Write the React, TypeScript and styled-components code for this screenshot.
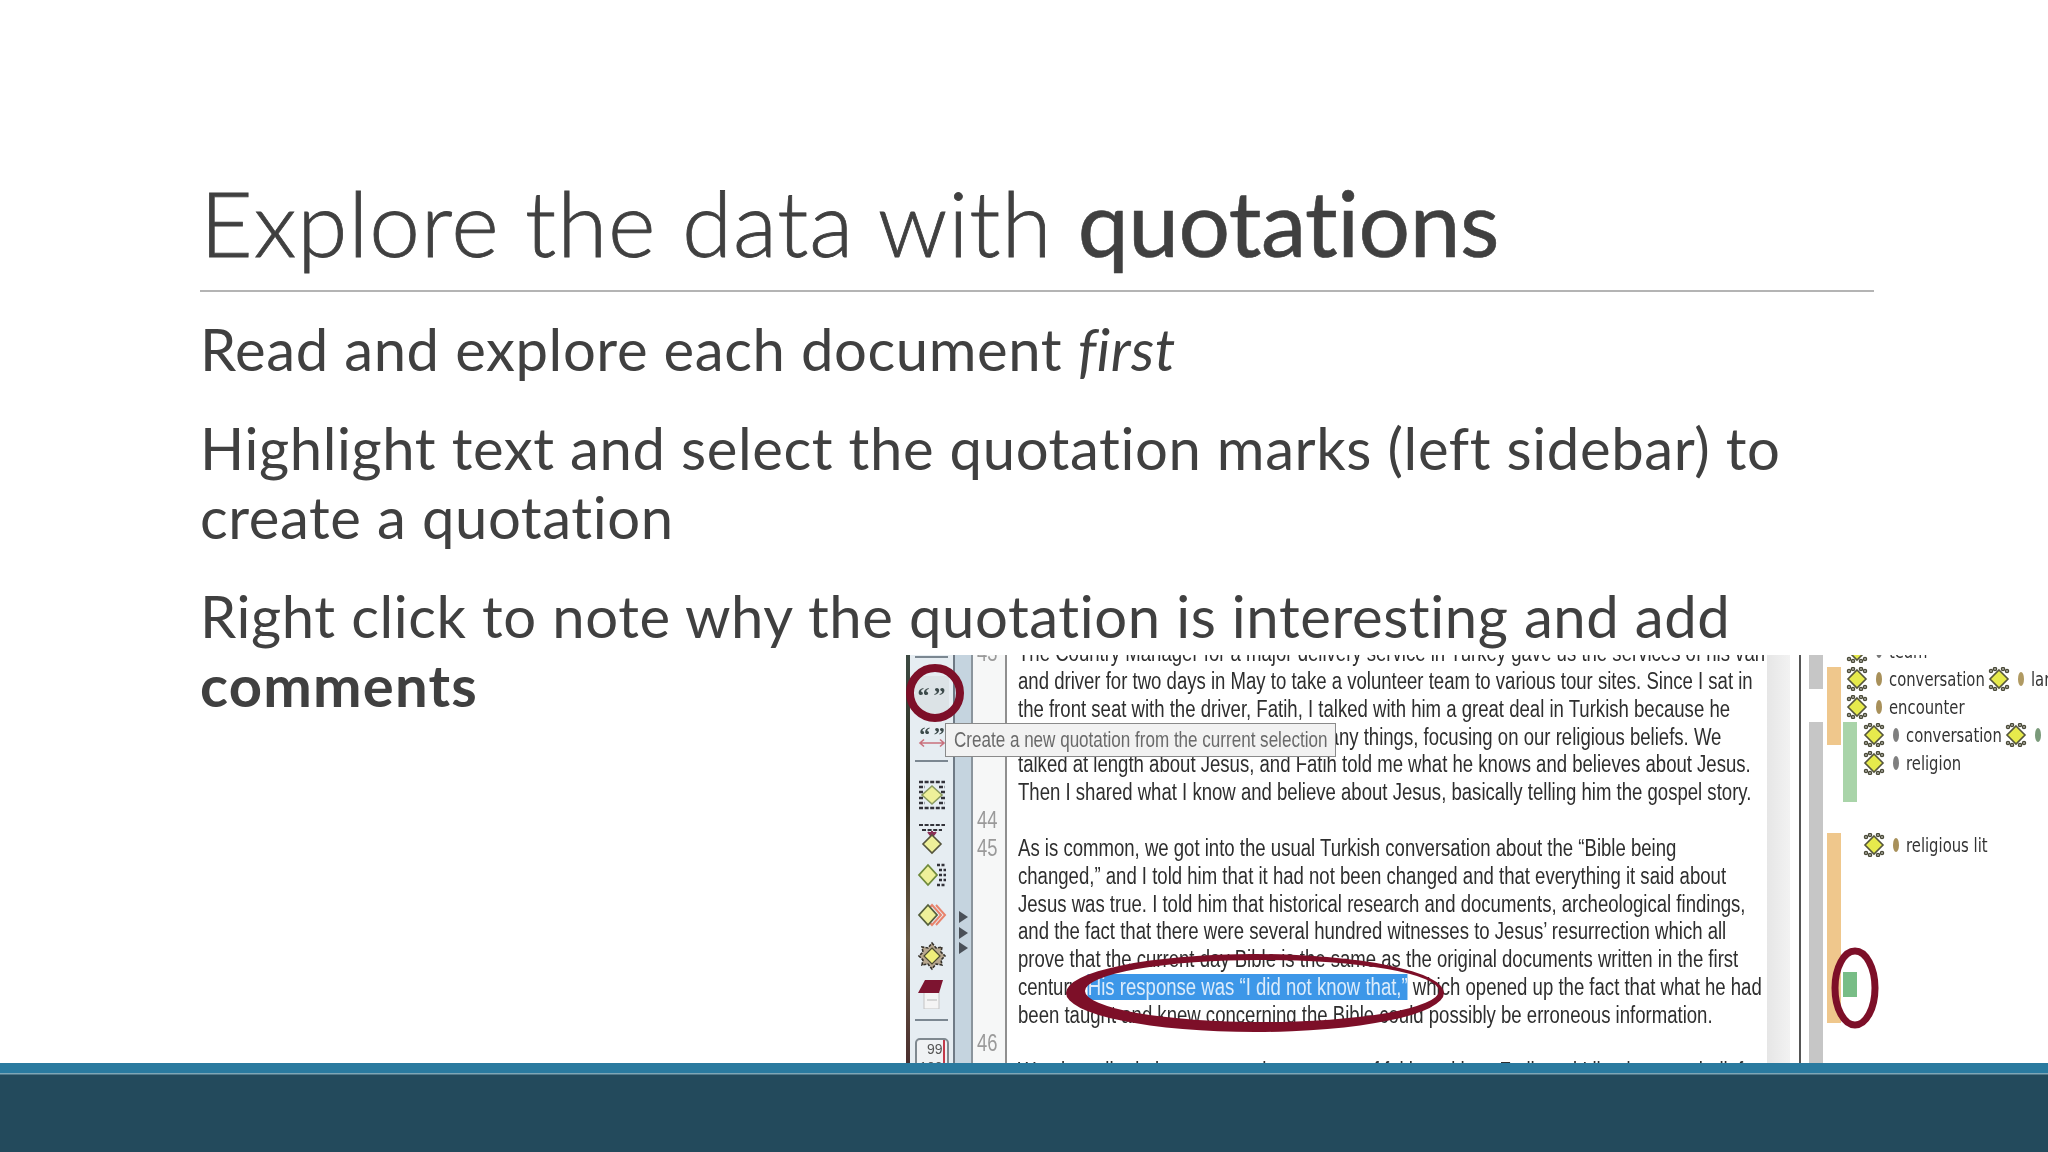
import React from "react";
import styled, { createGlobalStyle } from "styled-components";

const GlobalStyle = createGlobalStyle`
	html, body {
		margin: 0;
		background: #fff;
		overflow: hidden;
	}
`;

const DOC_RED = "#7d0f28";

const CodeGlyph = () => (
	<GlyphSvg viewBox="0 0 22 24">
		<g fill="none" stroke="#4a4a38" strokeWidth="1.5">
			<circle cx="3" cy="4" r="1.5" />
			<circle cx="7" cy="2" r="1.5" />
			<circle cx="15" cy="2" r="1.5" />
			<circle cx="19" cy="4" r="1.5" />
			<circle cx="3" cy="20" r="1.5" />
			<circle cx="7" cy="22" r="1.5" />
			<circle cx="15" cy="22" r="1.5" />
			<circle cx="19" cy="20" r="1.5" />
		</g>
		<path d="M11 3 L20 12 L11 21 L2 12 Z" fill="#e6ea4c" stroke="#55553c" strokeWidth="1.6" />
	</GlyphSvg>
);

const App = () => {
	const docRows: { num?: string; text?: React.ReactNode }[] = [
		{ num: "43", text: "The Country Manager for a major delivery service in Turkey gave us the services of his van" },
		{ text: "and driver for two days in May to take a volunteer team to various tour sites. Since I sat in" },
		{ text: "the front seat with the driver, Fatih, I talked with him a great deal in Turkish because he" },
		{ text: "was very interested in talking about many things, focusing on our religious beliefs. We" },
		{ text: "talked at length about Jesus, and Fatih told me what he knows and believes about Jesus." },
		{ text: "Then I shared what I know and believe about Jesus, basically telling him the gospel story." },
		{ num: "44" },
		{ num: "45", text: "As is common, we got into the usual Turkish conversation about the “Bible being" },
		{ text: "changed,” and I told him that it had not been changed and that everything it said about" },
		{ text: "Jesus was true. I told him that historical research and documents, archeological findings," },
		{ text: "and the fact that there were several hundred witnesses to Jesus’ resurrection which all" },
		{ text: "prove that the current day Bible is the same as the original documents written in the first" },
		{
			text: (
				<>
					century. <Selected>His response was “I did not know that,”</Selected> which opened up the fact that what he had
				</>
			),
		},
		{ text: "been taught and knew concerning the Bible could possibly be erroneous information." },
		{ num: "46" },
		{ text: "We also talked about many other aspects of faith and how Fatih and I lived out our beliefs" },
	];

	return (
		<Slide>
			<GlobalStyle />
			<Stage>
				<Title>
					Explore the data with <strong>quotations</strong>
				</Title>
				<Body>
					<p>
						Read and explore each document <em>first</em>
					</p>
					<p>
						Highlight text and select the quotation marks (left sidebar) to
						<br />
						create a quotation
					</p>
					<p>
						Right click to note why the quotation is interesting and add
						<br />
						<strong>comments</strong>
					</p>
				</Body>
				<Figure>
					<Edge />
					<Toolbar>
						<ToolRule $mt={1} />
						<QuoteButton>“ ”</QuoteButton>
						<ToolIcon $mt={12} width="30" height="24" viewBox="0 0 30 24">
							<text x="15" y="16" textAnchor="middle" fontFamily="Liberation Serif" fontWeight="700" fontSize="22" fill="#3c4a4a" wordSpacing="-2">
								“ ”
							</text>
							<path d="M3 17 H27 M7 13.5 L3 17 L7 20.5 M23 13.5 L27 17 L23 20.5" fill="none" stroke="#c9707c" strokeWidth="1.6" />
						</ToolIcon>
						<ToolRule $mt={10} />
						<ToolIcon $mt={18} width="30" height="30" viewBox="0 0 30 30">
							<path d="M2 2 H28 M2 7 H8 M22 7 H28 M2 12 H6 M24 12 H28 M2 18 H6 M24 18 H28 M2 23 H8 M22 23 H28 M2 28 H28" stroke="#33333a" strokeWidth="2.4" strokeDasharray="4 1.6" />
							<path d="M15 6 L25 15 L15 24 L5 15 Z" fill="#eef09a" stroke="#8a9a60" strokeWidth="1.6" />
						</ToolIcon>
						<ToolIcon $mt={12} width="30" height="38" viewBox="0 0 30 38">
							<path d="M2 3 H28 M5 8 H25" stroke="#33333a" strokeWidth="2.2" strokeDasharray="4 1.6" />
							<path d="M15 9 V14 M11 10 L15 15 L19 10" fill="#8a2f55" stroke="#8a2f55" strokeWidth="2" />
							<path d="M15 13 L24 22 L15 31 L6 22 Z" fill="#eef09a" stroke="#55553c" strokeWidth="1.6" />
						</ToolIcon>
						<ToolIcon $mt={2} width="30" height="26" viewBox="0 0 30 26">
							<path d="M11 3 L20 13 L11 23 L2 13 Z" fill="#eef09a" stroke="#6f8a3c" strokeWidth="1.8" />
							<path d="M20 3 H29 M22 8 H29 M22 13 H29 M22 18 H29 M20 23 H29" stroke="#33333a" strokeWidth="2.6" strokeDasharray="3 1.5" />
						</ToolIcon>
						<ToolIcon $mt={14} width="30" height="26" viewBox="0 0 30 26">
							<path d="M15 3 L24 13 L15 23 L6 13 Z M19 3 L28 13 L19 23" fill="none" stroke="#e8836c" strokeWidth="2" />
							<path d="M11 3 L20 13 L11 23 L2 13 Z" fill="#eef09a" stroke="#55603c" strokeWidth="1.8" />
						</ToolIcon>
						<ToolIcon $mt={13} width="30" height="30" viewBox="0 0 30 30">
							<path d="M15 2 L19 7 L25 6 L24 11 L28 15 L24 19 L25 24 L19 23 L15 28 L11 23 L5 24 L6 19 L2 15 L6 11 L5 6 L11 7 Z" fill="#b8a890" stroke="#33302a" strokeWidth="1.6" strokeDasharray="3 1.2" />
							<path d="M15 7 L23 15 L15 23 L7 15 Z" fill="#f0ee7a" stroke="#4a4a30" strokeWidth="1.2" />
						</ToolIcon>
						<ToolIcon $mt={8} width="30" height="30" viewBox="0 0 30 30">
							<rect x="7" y="13" width="15" height="17" fill="#f4f4f4" stroke="#c4c4c4" />
							<path d="M8 1 H26 L22 14 H1 Z" fill="#7d1430" />
							<path d="M10 21 H20" stroke="#c8c8c8" strokeWidth="1.4" />
						</ToolIcon>
						<ToolRule $mt={10} />
						<CountBox>
							99
							<br />
							100
						</CountBox>
					</Toolbar>
					<Strip>
						<StripArrow />
						<StripArrow />
						<StripArrow />
					</Strip>
					<DocPane>
						{docRows.map((row, i) => (
							<DocRow key={i}>
								<LineNo>{row.num}</LineNo>
								<DocText>{row.text}</DocText>
							</DocRow>
						))}
					</DocPane>
					<ScrollTrack />
					<MarginPane>
						<CodeBar $left={8} $top={0} $height={34} $color="#c6c6c6" />
						<CodeBar $left={8} $top={67} $height={341} $color="#c6c6c6" />
						<CodeBar $left={26} $top={12} $height={78} $color="#efc78c" />
						<CodeBar $left={26} $top={178} $height={190} $color="#efc78c" />
						<CodeBar $left={42} $top={67} $height={80} $color="#a9d4a9" />
						<CodeBar $left={42} $top={317} $height={25} $color="#78bd86" />

						<CodeRow $left={45} $top={-16}>
							<CodeGlyph />
							<CodeDot $color="#777" />
							<CodeLabel $w={60}>team</CodeLabel>
						</CodeRow>
						<CodeRow $left={45} $top={12}>
							<CodeGlyph />
							<CodeDot $color="#a8905a" />
							<CodeLabel $w={92}>conversation</CodeLabel>
							<CodeGlyph />
							<CodeDot $color="#b09a62" />
							<CodeLabel $w={30}>language</CodeLabel>
						</CodeRow>
						<CodeRow $left={45} $top={40}>
							<CodeGlyph />
							<CodeDot $color="#a8905a" />
							<CodeLabel $w={75}>encounter</CodeLabel>
						</CodeRow>
						<CodeRow $left={62} $top={68}>
							<CodeGlyph />
							<CodeDot $color="#7f7f7f" />
							<CodeLabel $w={92}>conversation</CodeLabel>
							<CodeGlyph />
							<CodeDot $color="#7a9a7a" />
						</CodeRow>
						<CodeRow $left={62} $top={96}>
							<CodeGlyph />
							<CodeDot $color="#7f7f7f" />
							<CodeLabel $w={60}>religion</CodeLabel>
						</CodeRow>
						<CodeRow $left={62} $top={178}>
							<CodeGlyph />
							<CodeDot $color="#a8905a" />
							<CodeLabel $w={80}>religious lit</CodeLabel>
						</CodeRow>
					</MarginPane>

					<Tooltip>
						<TipText>Create a new quotation from the current selection</TipText>
					</Tooltip>

					<Marks viewBox="0 0 1142 408">
						<circle cx="29" cy="38" r="25" fill="none" stroke={DOC_RED} strokeWidth="8" />
						<path
							fillRule="evenodd"
							fill={DOC_RED}
							d="M160 338 A189 39 0 1 1 538 338 A189 39 0 1 1 160 338 Z M179 336 A177 31 0 1 0 533 336 A177 31 0 1 0 179 336 Z"
						/>
						<ellipse cx="949" cy="333" rx="20" ry="37" fill="none" stroke={DOC_RED} strokeWidth="7" />
					</Marks>
				</Figure>
			</Stage>
			<Footer />
		</Slide>
	);
};

// styles
const Slide = styled.div`
	width: 2048px;
	height: 1152px;
	display: flex;
	flex-direction: column;
	background: #fff;
	color: #404040;
	font-family: "Lato", "Liberation Sans", sans-serif;
	font-variant-ligatures: none;
`;

const Stage = styled.main`
	position: relative;
	height: 1063px;
	padding: 0 174px 0 200px;
`;

const Title = styled.h1`
	margin: 0;
	height: 292px;
	box-sizing: border-box;
	padding: 167px 0 0 0;
	border-bottom: 2px solid #b4b4b4;
	font-size: 91px;
	line-height: 110px;
	font-weight: 300;
	letter-spacing: 0.85px;
	-webkit-text-stroke: 0.8px #404040;
	white-space: nowrap;

	strong {
		font-weight: 400;
		letter-spacing: -0.5px;
		-webkit-text-stroke: 0.6px #404040;
	}
`;

const Body = styled.section`
	padding-top: 22px;
	font-size: 58px;
	letter-spacing: 0.6px;
	line-height: 69px;

	p {
		margin: 0 0 30px;
		white-space: nowrap;
	}
	strong {
		font-weight: 700;
		letter-spacing: 1.2px;
	}
`;

const Figure = styled.figure`
	position: absolute;
	right: 0;
	bottom: 0;
	width: 1142px;
	height: 408px;
	margin: 0;
	display: flex;
	background: #fff;
	overflow: hidden;
	filter: blur(0.55px);
	letter-spacing: 0;
`;

const Edge = styled.div`
	flex: 0 0 4px;
	background: linear-gradient(#3c4a42, #2f2a1c 35%, #6a5a44 70%, #4a2e2e);
`;

const Toolbar = styled.div`
	flex: 0 0 43px;
	display: flex;
	flex-direction: column;
	align-items: center;
	background: #e6edf2;
	border-right: 2px solid #6f7a85;
	overflow: hidden;
`;

const ToolRule = styled.div<{ $mt: number }>`
	flex: 0 0 2px;
	width: 33px;
	margin-top: ${(p) => p.$mt}px;
	background: #7b8791;
`;

const ToolIcon = styled.svg<{ $mt: number }>`
	flex: none;
	margin-top: ${(p) => p.$mt}px;
`;

const QuoteButton = styled.div`
	flex: 0 0 34px;
	width: 34px;
	margin-top: 18px;
	background: #dce3e6;
	color: #3c4a4a;
	font-family: "Liberation Serif", serif;
	font-weight: 700;
	font-size: 24px;
	word-spacing: -2px;
	line-height: 38px;
	text-align: center;
	white-space: nowrap;
`;

const CountBox = styled.div`
	flex: none;
	width: 34px;
	height: 44px;
	box-sizing: border-box;
	margin-top: 17px;
	padding-right: 4px;
	border: 2px solid #7f8990;
	border-radius: 5px;
	background: linear-gradient(to left, #f0f2f4 2px, #c23a4a 2px, #c23a4a 4px, #f0f2f4 4px);
	color: #555;
	font-family: "Liberation Sans", sans-serif;
	font-size: 14px;
	line-height: 18px;
	text-align: right;
`;

const Strip = styled.div`
	flex: 0 0 18px;
	box-sizing: border-box;
	padding: 256px 0 0 4px;
	background: #c5d4df;
	border-right: 2px solid #8a949c;
	display: flex;
	flex-direction: column;
	gap: 3.5px;
`;

const StripArrow = styled.div`
	width: 0;
	height: 0;
	border-left: 9px solid #4a5058;
	border-top: 6px solid transparent;
	border-bottom: 6px solid transparent;
`;

const DocPane = styled.div`
	flex: 0 0 794px;
	margin-top: -15px;
	background: linear-gradient(to right, #f6f7f7 32px, #8f8f8f 32px, #8f8f8f 34px, #fff 34px);
	overflow: hidden;
`;

const DocRow = styled.div`
	height: 27.85px;
	display: grid;
	grid-template-columns: 45px 1fr;
	align-items: baseline;
	line-height: 27.85px;
	white-space: nowrap;
`;

const LineNo = styled.span`
	padding-left: 5px;
	color: #9a9a9a;
	font-family: "Liberation Sans", sans-serif;
	font-size: 23px;
	transform: scaleX(0.8);
	transform-origin: left;
`;

const DocText = styled.span`
	display: inline-block;
	color: #2e2e2e;
	font-family: "Liberation Sans", sans-serif;
	font-size: 23.5px;
	transform: scaleX(0.79);
	transform-origin: left;
`;

const Selected = styled.span`
	background: #3d97e8;
	color: #dcecfb;
`;

const ScrollTrack = styled.div`
	flex: 0 0 32px;
	background: linear-gradient(to right, #e6e6e6 0, #f2f2f2 23px, #fff 23px);
`;

const MarginPane = styled.div`
	position: relative;
	flex: 1;
	border-left: 2px solid #555;
`;

const CodeBar = styled.div<{ $left: number; $top: number; $height: number; $color: string }>`
	position: absolute;
	left: ${(p) => p.$left}px;
	top: ${(p) => p.$top}px;
	width: 14px;
	height: ${(p) => p.$height}px;
	background: ${(p) => p.$color};
`;

const CodeRow = styled.div<{ $left: number; $top: number }>`
	position: absolute;
	left: ${(p) => p.$left}px;
	top: ${(p) => p.$top}px;
	height: 24px;
	display: flex;
	align-items: center;
	white-space: nowrap;
`;

const GlyphSvg = styled.svg`
	flex: 0 0 22px;
	width: 22px;
	height: 24px;
`;

const CodeDot = styled.span<{ $color: string }>`
	flex: 0 0 6px;
	height: 14px;
	margin: 0 7px 0 8px;
	border-radius: 50%;
	background: ${(p) => p.$color};
`;

const CodeLabel = styled.span<{ $w: number }>`
	flex: 0 0 ${(p) => p.$w}px;
	width: ${(p) => p.$w}px;
	margin-right: 7px;
	color: #333;
	font-family: "DejaVu Sans", sans-serif;
	font-size: 19px;
	transform: scaleX(0.78);
	transform-origin: left;
`;

const Tooltip = styled.div`
	position: absolute;
	left: 39px;
	top: 68px;
	width: 391px;
	height: 34px;
	box-sizing: border-box;
	padding-left: 8px;
	background: #f2f2f2;
	border: 1px solid #8a8a8a;
	overflow: hidden;
	line-height: 32px;
	white-space: nowrap;
`;

const TipText = styled.span`
	display: inline-block;
	color: #6a6a6a;
	font-family: "Liberation Sans", sans-serif;
	font-size: 22px;
	transform: scaleX(0.775);
	transform-origin: left;
`;

const Marks = styled.svg`
	position: absolute;
	inset: 0;
	width: 1142px;
	height: 408px;
	pointer-events: none;
`;

const Footer = styled.footer`
	flex: 1;
	background: linear-gradient(#7ea6b6 0, #7ea6b6 1px, #234a5c 2px);
	border-top: 10px solid #2a7a9f;
`;

export default App;
